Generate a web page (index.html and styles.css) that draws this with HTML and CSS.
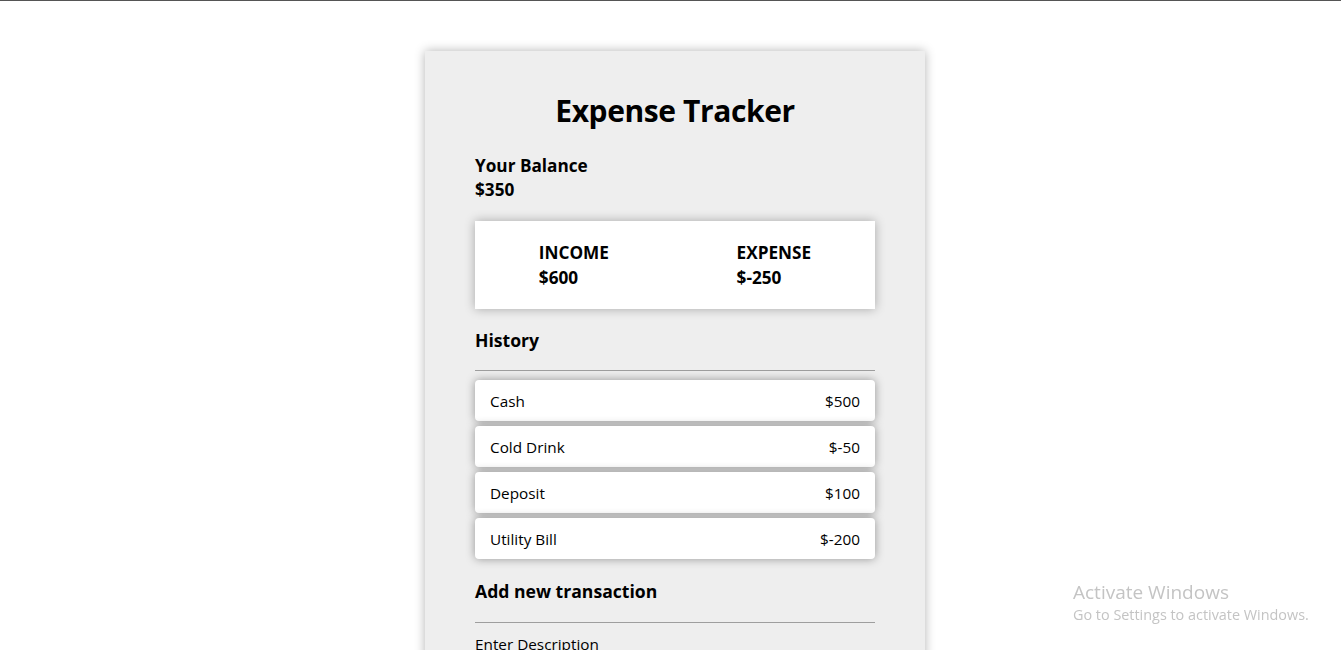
FILE: index.html
```html
<!DOCTYPE html>
<html lang="en">
<head>
<meta charset="UTF-8">
<title>Expense Tracker</title>
<link rel="stylesheet" href="styles.css">
</head>
<body>
  <div class="card">
    <h1 class="title">Expense Tracker</h1>
    <div class="balance">
      <h4 class="balance-label">Your Balance</h4>
      <h4 class="balance-value">$350</h4>
    </div>
    <div class="inc-exp">
      <div class="inc-exp-col">
        <h4>INCOME</h4>
        <p class="money">$600</p>
      </div>
      <div class="inc-exp-col">
        <h4>EXPENSE</h4>
        <p class="money">$-250</p>
      </div>
    </div>
    <h3 class="section-title">History</h3>
    <ul class="list">
      <li class="item"><span>Cash</span><span>$500</span></li>
      <li class="item"><span>Cold Drink</span><span>$-50</span></li>
      <li class="item"><span>Deposit</span><span>$100</span></li>
      <li class="item"><span>Utility Bill</span><span>$-200</span></li>
    </ul>
    <h3 class="section-title add-title">Add new transaction</h3>
    <form class="form">
      <label class="label" for="desc">Enter Description</label>
    </form>
  </div>
  <div class="watermark">
    <div class="wm-title">Activate Windows</div>
    <div class="wm-sub">Go to Settings to activate Windows.</div>
  </div>
</body>
</html>
```

FILE: styles.css
```css
* { box-sizing: border-box; }
html, body { margin: 0; padding: 0; }
body {
  font-family: "Open Sans", "Noto Sans", sans-serif;
  color: #000;
  background: #fff;
  border-top: 1px solid #555;
  padding-left: 9px;
  min-height: 650px;
  overflow: hidden;
}
.card {
  width: 500px;
  margin: 50px auto 0;
  background: #eeeeee;
  padding: 41px 50px 40px;
  box-shadow: 0 0 10px rgba(0, 0, 0, 0.3);
}
.title {
  margin: 0;
  font-size: 30px;
  letter-spacing: -0.4px;
  line-height: 38px;
  font-weight: 700;
  text-align: center;
}
.balance { margin-top: 24px; }
.balance h4 {
  margin: 0;
  font-size: 17.2px;
  line-height: 24px;
  font-weight: 700;
}
.inc-exp {
  margin-top: 19px;
  background: #fff;
  padding: 19px 0;
  display: flex;
  justify-content: space-around;
  box-shadow: 0 0 10px rgba(0, 0, 0, 0.3);
}
.inc-exp-col h4, .inc-exp-col .money {
  margin: 0;
  font-size: 17.2px;
  line-height: 25px;
  font-weight: 700;
}
.section-title {
  margin: 19px 0 9px;
  font-size: 17.6px;
  line-height: 24px;
  font-weight: 700;
  padding-bottom: 18px;
  border-bottom: 1px solid #9e9e9e;
}
.list {
  list-style: none;
  margin: 0;
  padding: 0;
}
.item {
  display: flex;
  justify-content: space-between;
  background: #fff;
  border-radius: 4px;
  padding: 11px 15px 9px;
  font-size: 15.3px;
  line-height: 21px;
  margin-bottom: 5px;
  box-shadow: 0 0 10px rgba(0, 0, 0, 0.38);
}
.item:last-child { margin-bottom: 0; }
.section-title.add-title { margin: 20px 0 0; padding-bottom: 19px; }
.label {
  display: block;
  margin-top: 11px;
  font-size: 15.3px;
  line-height: 21px;
}
.watermark {
  position: fixed;
  left: 1073px;
  top: 580px;
  color: #c4c4c4;
  font-family: "Open Sans", "Noto Sans", sans-serif;
}
.wm-title { font-size: 19px; line-height: 24px; }
.wm-sub { font-size: 14.4px; line-height: 22px; }
```
